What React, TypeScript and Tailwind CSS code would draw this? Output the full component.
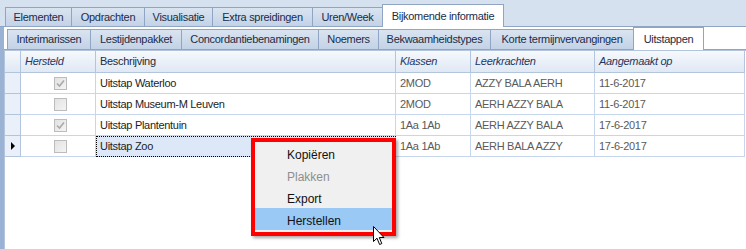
import React from 'react'

const topTabs = [
  { label: 'Elementen', w: 'w-[66px]' },
  { label: 'Opdrachten', w: 'w-[73px]' },
  { label: 'Visualisatie', w: 'w-[68px]' },
  { label: 'Extra spreidingen', w: 'w-[100px]' },
  { label: 'Uren/Week', w: 'w-[70px]' },
  { label: 'Bijkomende informatie', w: 'w-[122px]', active: true },
]

const subTabs = [
  { label: 'Interimarissen', w: 'w-[83px]' },
  { label: 'Lestijdenpakket', w: 'w-[91px]' },
  { label: 'Concordantiebenamingen', w: 'w-[137px]' },
  { label: 'Noemers', w: 'w-[60px]' },
  { label: 'Bekwaamheidstypes', w: 'w-[112px]' },
  { label: 'Korte termijnvervangingen', w: 'w-[143px]' },
  { label: 'Uitstappen', w: 'w-[71px]', active: true },
]

const rows = [
  { done: true, desc: 'Uitstap Waterloo', klassen: '2MOD', lk: 'AZZY BALA AERH', date: '11-6-2017' },
  { done: false, desc: 'Uitstap Museum-M Leuven', klassen: '2MOD', lk: 'AERH AZZY BALA', date: '11-6-2017' },
  { done: true, desc: 'Uitstap Plantentuin', klassen: '1Aa 1Ab', lk: 'AERH AZZY BALA', date: '17-6-2017' },
  { done: false, desc: 'Uitstap Zoo', klassen: '1Aa 1Ab', lk: 'AERH BALA AZZY', date: '17-6-2017', current: true },
]

function Tab({ label, w, active, short }: { label: string; w: string; active?: boolean; short?: boolean }) {
  if (active) {
    return (
      <div
        className={`${w} relative z-10 -mb-px flex h-[23px] items-center justify-center border-x border-t border-[#8fa5c3] bg-white`}
      >
        {label}
      </div>
    )
  }
  return (
    <div
      className={`${w} flex ${short ? 'h-[19px]' : 'h-[20px]'} items-center justify-center border-l border-t border-[#8fa5c3] bg-linear-to-b from-[#dae4f1] to-[#c3d2e6]`}
    >
      {label}
    </div>
  )
}

function Check({ checked }: { checked: boolean }) {
  return (
    <div className="flex h-[13px] w-[13px] items-center justify-center border border-[#bcbcbc] bg-linear-to-br from-[#e2e2e2] to-[#f4f4f4]">
      {checked && (
        <svg width="9" height="9" viewBox="0 0 9 9">
          <path d="M1 4.5 L3.5 7 L8 1.5" fill="none" stroke="#a9a9a9" strokeWidth="1.6" />
        </svg>
      )}
    </div>
  )
}

const head = 'flex h-[22px] items-center border-r border-b border-[#b3c5dd] bg-linear-to-b from-[#f6f9fd] to-[#dfe8f4] pl-[4px]'
const cell = 'flex h-[21px] items-center border-r border-b border-[#c6d6ec] pl-[4px]'

export default function App() {
  return (
    <div className="relative flex h-[249px] w-[746px] flex-col overflow-hidden bg-[#d6e1ef] font-['Liberation_Sans',Arial,sans-serif] text-[11px] tracking-[-0.3px] text-[#1b2c48]">
      {/* first tab row */}
      <div className="flex h-[27px] items-end border-b border-[#8fa5c3] pl-[5px]">
        {topTabs.map((t) => (
          <Tab key={t.label} label={t.label} w={t.w} active={t.active} short />
        ))}
      </div>

      <div className="flex flex-1 flex-col border-l-4 border-[#9ab2d3] bg-white">
        {/* second tab row */}
        <div className="flex h-[23px] items-end border-b border-[#8fa5c3] pl-[3px]">
          {subTabs.map((t) => (
            <Tab key={t.label} label={t.label} w={t.w} active={t.active} />
          ))}
        </div>

        {/* grid */}
        <div className="flex-1 border-l border-t border-[#b3c5dd]">
          <div className="grid grid-cols-[16px_75px_300px_75px_124px_150px]">
            <div className={head} />
            <div className={`${head} italic text-[#1d3763]`}>Hersteld</div>
            <div className={`${head} text-[#1f2a3a]`}>Beschrijving</div>
            <div className={`${head} italic text-[#1d3763]`}>Klassen</div>
            <div className={`${head} italic text-[#1d3763]`}>Leerkrachten</div>
            <div className={`${head} italic text-[#1d3763]`}>Aangemaakt op</div>

            {rows.map((r) => (
              <React.Fragment key={r.desc}>
                <div className="flex h-[21px] items-center justify-center border-r border-b border-[#b3c5dd] bg-[#eaf0f9]">
                  {r.current && (
                    <svg width="5" height="8" viewBox="0 0 5 8" className="ml-[2px]">
                      <path d="M0 0 L4 4 L0 8 Z" fill="#000" />
                    </svg>
                  )}
                </div>
                <div className={`${cell} justify-center pl-0`}>
                  <Check checked={r.done} />
                </div>
                <div
                  className={`${cell} text-[#1c1c26] ${r.current ? 'bg-[#dce8f8] outline-1 -outline-offset-1 outline-dotted outline-black' : ''}`}
                >
                  {r.desc}
                </div>
                <div className={`${cell} text-[#5a5a5a]`}>{r.klassen}</div>
                <div className={`${cell} text-[#5a5a5a]`}>{r.lk}</div>
                <div className={`${cell} text-[#5a5a5a]`}>{r.date}</div>
              </React.Fragment>
            ))}
          </div>
        </div>
      </div>

      {/* context menu, framed in red */}
      <div className="absolute left-[251px] top-[138px] flex h-[98px] w-[145px] flex-col border-4 border-[#ff0000] bg-[#f0f0f0] text-[12px] tracking-normal text-[#111] shadow-[2px_2px_3px_rgba(0,0,0,0.35)]">
        <div className="flex h-[22px] items-center pl-[32px] pt-[3px]">Kopiëren</div>
        <div className="flex h-[22px] items-center pl-[32px] pt-[3px] text-[#8e8e8e]">Plakken</div>
        <div className="flex h-[22px] items-center pl-[32px] pt-[3px]">Export</div>
        <div className="flex h-[22px] items-center bg-[#99c9f4] pl-[32px] pt-[3px]">Herstellen</div>
      </div>

      {/* mouse pointer */}
      <svg className="absolute left-[373px] top-[226px]" width="13" height="20" viewBox="0 0 13 20">
        <path
          d="M0.5 0.5 L0.5 15.5 L4 12.2 L6.6 18.5 L8.8 17.6 L6.3 11.5 L11 11.5 Z"
          fill="#fff"
          stroke="#000"
          strokeWidth="1"
          strokeLinejoin="miter"
        />
      </svg>
    </div>
  )
}
